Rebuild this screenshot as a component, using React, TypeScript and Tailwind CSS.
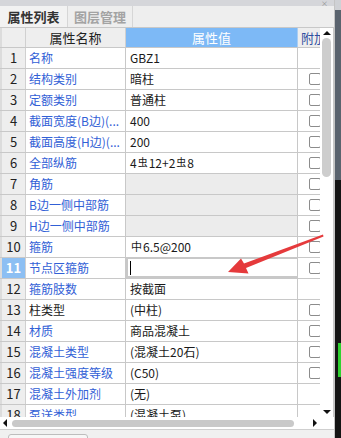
import React from "react";

type Row = {
  n: number;
  name: string;
  val?: React.ReactNode;
  cb: boolean;
  gray?: boolean;
  black?: boolean;
  sel?: boolean;
};

const rows: Row[] = [
  { n: 1, name: "名称", val: "GBZ1", cb: false },
  { n: 2, name: "结构类别", val: "暗柱", cb: true },
  { n: 3, name: "定额类别", val: "普通柱", cb: true },
  { n: 4, name: "截面宽度(B边)(...", val: "400", cb: true },
  { n: 5, name: "截面高度(H边)(...", val: "200", cb: true },
  {
    n: 6,
    name: "全部纵筋",
    val: (
      <span>
        4<span className="text-[10px] relative -top-[2px] mx-[1px]">虫</span>12+2
        <span className="text-[10px] relative -top-[2px] mx-[1px]">虫</span>8
      </span>
    ),
    cb: true,
  },
  { n: 7, name: "角筋", cb: true, gray: true },
  { n: 8, name: "B边一侧中部筋", cb: true, gray: true },
  { n: 9, name: "H边一侧中部筋", cb: true, gray: true },
  {
    n: 10,
    name: "箍筋",
    val: (
      <span className="pl-[1px]">
        <span className="text-[11px] relative -top-[1px] mr-[1px]">中</span>6.5@200
      </span>
    ),
    cb: true,
  },
  { n: 11, name: "节点区箍筋", cb: true, sel: true },
  { n: 12, name: "箍筋肢数", val: "按截面", cb: false },
  { n: 13, name: "柱类型", val: "(中柱)", cb: true, black: true },
  { n: 14, name: "材质", val: "商品混凝土", cb: true },
  { n: 15, name: "混凝土类型", val: "(混凝土20石)", cb: true },
  { n: 16, name: "混凝土强度等级", val: "(C50)", cb: true },
  { n: 17, name: "混凝土外加剂", val: "(无)", cb: false },
  { n: 18, name: "泵送类型", val: "(混凝土泵)", cb: false },
];

const font = { fontFamily: '"Noto Sans CJK SC", "Liberation Sans", sans-serif' };

export default function App() {
  return (
    <div
      className="relative w-[341px] h-[438px] overflow-hidden bg-[#f0f0f0] flex text-[12px] text-[#1a1a1a]"
      style={font}
    >
      {/* main panel */}
      <div className="w-[335px] h-full flex flex-col border-r border-[#c4c4c4]">
        {/* top strip */}
        <div className="h-[6px] bg-[#d5d6da] relative shrink-0">
          <span className="absolute right-[6px] top-0 text-[7px] text-[#8a8a8a] leading-[6px]">×</span>
        </div>
        {/* tabs */}
        <div className="h-[22px] shrink-0 flex items-stretch bg-[#eeeeee] border-b border-[#c8c8c8]">
          <div className="w-[68px] flex items-center justify-center border-r border-[#d6d6d6] bg-[#f2f2f2] text-[13px] font-bold text-[#333]">
            属性列表
          </div>
          <div className="w-[65px] flex items-center justify-center border-r border-[#d6d6d6] text-[13px] font-bold text-[#a3a3a3]">
            图层管理
          </div>
        </div>
        {/* table area */}
        <div className="h-[389px] shrink-0 flex bg-white">
          <div className="w-[320px] overflow-hidden flex flex-col">
            {/* header */}
            <div className="h-[20px] shrink-0 flex border-b border-[#c8c8c8]">
              <div className="w-[26px] shrink-0 bg-[#eeeeee] border-r border-[#d0d0d0] border-l-2 border-l-[#dcdcdc]" />
              <div className="w-[100px] shrink-0 bg-[#eeeeee] border-r border-[#d0d0d0] flex items-center justify-center text-[13px] text-[#222]">
                属性名称
              </div>
              <div className="w-[172px] shrink-0 bg-[#7db9f6] border-r border-[#a9cdf3] flex items-center justify-center text-[13px] text-white">
                属性值
              </div>
              <div className="flex-1 bg-[#eeeeee] flex items-center pl-[3px] text-[13px] text-[#2f4ea0] whitespace-nowrap overflow-hidden">
                附加
              </div>
            </div>
            {rows.map((r) => (
              <div key={r.n} className="h-[21px] shrink-0 flex border-b border-[#c8c8c8]">
                <div
                  className={
                    "w-[26px] shrink-0 border-r border-[#d0d0d0] border-l-2 border-l-[#dcdcdc] flex items-center justify-center text-[13px] " +
                    (r.sel ? "bg-[#8cbff3] text-white font-bold" : "bg-[#eeeeee] text-[#222]")
                  }
                >
                  {r.n}
                </div>
                <div
                  className={
                    "w-[100px] shrink-0 border-r border-[#c8c8c8] flex items-center pl-[3px] whitespace-nowrap overflow-hidden text-[12px] " +
                    (r.black ? "text-[#1a1a1a]" : "text-[#3160d6]")
                  }
                >
                  {r.name}
                </div>
                <div
                  className={
                    "w-[172px] shrink-0 border-r border-[#c8c8c8] flex items-center whitespace-nowrap overflow-hidden text-[12px] text-[#1a1a1a] " +
                    (r.gray ? "bg-[#ececec] " : "") +
                    (r.sel ? "border-2 border-[#6ea8ee] -mt-[1px] pl-[2px]" : "pl-[4px]")
                  }
                >
                  {r.sel ? <span className="w-[1px] h-[14px] bg-black" /> : r.val}
                </div>
                <div className="flex-1 flex items-center pl-[11px]">
                  {r.cb && <div className="w-[12px] h-[12px] shrink-0 border border-[#8c8c8c] rounded-[2px] bg-white" />}
                </div>
              </div>
            ))}
          </div>
          {/* vertical scrollbar */}
          <div className="w-[13px] h-full bg-white flex flex-col items-center pt-[3px] pb-[3px]">
            <div className="w-0 h-0 border-l-[4px] border-r-[4px] border-b-[4px] border-l-transparent border-r-transparent border-b-[#111]" />
            <div className="w-[9px] h-[139px] mt-[3px] rounded-full bg-[#cdcdcd]" />
            <div className="flex-1" />
            <div className="w-0 h-0 border-l-[4px] border-r-[4px] border-t-[4px] border-l-transparent border-r-transparent border-t-[#111]" />
          </div>
          <div className="w-[1px] h-full bg-[#c8c8c8]" />
        </div>
        {/* horizontal scrollbar */}
        <div className="h-[13px] shrink-0 bg-white flex items-center border-b border-[#cfcfcf] pl-[3px]">
          <div className="w-0 h-0 border-t-[4px] border-b-[4px] border-r-[4px] border-t-transparent border-b-transparent border-r-[#111]" />
          <div className="w-[282px] h-[7px] ml-[5px] rounded-full bg-[#c9c9c9]" />
          <div className="w-0 h-0 ml-[19px] border-t-[4px] border-b-[4px] border-l-[4px] border-t-transparent border-b-transparent border-l-[#111]" />
        </div>
        {/* bottom */}
        <div className="flex-1 bg-[#f0f0f0] pl-[8px] pt-[4px]">
          <div className="w-[80px] h-[12px] border border-[#bdbdbd] rounded-[3px] bg-[#f7f7f7]" />
        </div>
      </div>
      {/* right dark strip */}
      <div className="w-[6px] h-full flex flex-col">
        <div className="h-[10px] bg-[#cfd1d5]" />
        <div className="h-[170px] bg-[#5a636e]" />
        <div className="flex-1 bg-[#141414] flex flex-col">
          <div className="h-[163px]" />
          <div className="h-[34px] bg-[#2fd12f] ml-[3px]" />
        </div>
      </div>
      {/* red arrow */}
      <svg className="absolute left-0 top-0 pointer-events-none" width="341" height="438">
        <polygon
          points="228,272 241,258.5 244,263.5 323,234.5 323.5,236.5 246,268 248.5,273.5"
          fill="#e53a3c"
        />
      </svg>
    </div>
  );
}
